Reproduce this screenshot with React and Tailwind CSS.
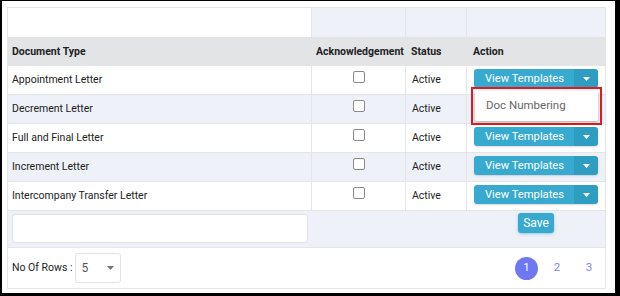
import React from "react";

const rows = [
  "Appointment Letter",
  "Decrement Letter",
  "Full and Final Letter",
  "Increment Letter",
  "Intercompany Transfer Letter",
];

function Caret({ className = "" }) {
  return (
    <svg width="7" height="4" viewBox="0 0 7 4" className={className}>
      <path d="M0 0 L7 0 L3.5 4 Z" fill="currentColor" />
    </svg>
  );
}

function ViewBtn() {
  return (
    <div className="flex h-[19px] w-[124px] rounded-[3px] overflow-hidden shadow-[0_1px_2px_rgba(0,0,0,0.15)]">
      <div className="flex-1 bg-[#38aad0] text-white text-[11.2px] leading-[19px] pl-[11px] whitespace-nowrap">View Templates</div>
      <div className="w-[24px] bg-[#2f9cc2] flex items-center justify-center text-white">
        <Caret />
      </div>
    </div>
  );
}

function Checkbox() {
  return <div className="w-[12px] h-[12px] rounded-[2px] border border-[#8a8a8a] bg-white" />;
}

export default function App() {
  return (
    <div
      className="w-[620px] h-[296px] bg-white border-l-2 border-t border-r-[5px] border-b-[3px] border-black pl-[5px] pt-[6px] overflow-hidden"
      style={{ fontFamily: "Roboto, 'Liberation Sans', sans-serif" }}
    >
      <div className="w-[599px] border border-[#e3e5e8] text-[10.5px] text-[#222] relative">
        {/* top empty row */}
        <div className="flex h-[29px]">
          <div className="w-[304px] bg-white border-r border-[#e3e5e8]" />
          <div className="w-[94px] bg-[#eef1f7] border-r border-[#e3e5e8]" />
          <div className="w-[61px] bg-[#eef1f7] border-r border-[#e3e5e8]" />
          <div className="flex-1 bg-[#eef1f7]" />
        </div>
        {/* header */}
        <div className="flex h-[29px] bg-[#e3e4e6] font-bold items-center whitespace-nowrap">
          <div className="w-[304px] pl-[4px]">Document Type</div>
          <div className="w-[94px] pl-[4px]">Acknowledgement</div>
          <div className="w-[61px] pl-[5px]">Status</div>
          <div className="flex-1 pl-[6px]">Action</div>
        </div>
        {rows.map((r, i) => (
          <div
            key={r}
            className={`flex h-[29px] border-b border-[#e3e5e8] ${i % 2 === 1 ? "bg-[#eef1f8]" : "bg-white"}`}
          >
            <div className="w-[304px] pl-[4px] flex items-center border-r border-[#e3e5e8]">{r}</div>
            <div className="w-[94px] flex justify-center pt-[5px] border-r border-[#e3e5e8]">
              <Checkbox />
            </div>
            <div className="w-[61px] pl-[6px] pt-[6px] border-r border-[#e3e5e8]">Active</div>
            <div className="flex-1 pl-[7px] pt-[3px]">{i === 1 ? null : <ViewBtn />}</div>
          </div>
        ))}
        {/* save row */}
        <div className="flex h-[37px] bg-[#eef1f8] border-b border-[#e3e5e8]">
          <div className="w-[304px] pl-[4px] pt-[3px]">
            <div className="w-[296px] h-[29px] bg-white border border-[#dfe1e5] rounded-[3px]" />
          </div>
          <div className="w-[94px]" />
          <div className="w-[61px]" />
          <div className="flex-1 flex justify-center pt-[2px]">
            <div className="h-[20px] px-[5px] bg-[#38aad0] text-white text-[12px] leading-[20px] rounded-[3px] shadow-[0_1px_3px_rgba(56,170,208,0.5)]">
              Save
            </div>
          </div>
        </div>
        {/* footer */}
        <div className="flex h-[40px] items-center bg-white">
          <div className="pl-[4px] flex items-center gap-[3px]">
            <span>No Of Rows :</span>
            <div className="w-[46px] h-[30px] border border-[#dfe1e5] rounded-[3px] flex items-center justify-between pl-[5px] pr-[6px] text-[#555]">
              <span className="text-[12px]">5</span>
              <Caret className="text-[#777]" />
            </div>
          </div>
          <div className="ml-auto flex items-center pr-[3px] text-[11.5px]">
            <div className="w-[23px] h-[23px] rounded-full bg-[#6f78f2] text-white flex items-center justify-center">1</div>
            <div className="w-[38px] text-center text-[#7c84f3]">2</div>
            <div className="w-[26px] text-center text-[#7c84f3]">3</div>
          </div>
        </div>

        {/* dropdown menu overlay */}
        <div className="absolute left-[463px] top-[79px] w-[131px] h-[38px] border-2 border-[#e3191e] p-[2px]">
          <div className="w-full h-full bg-white rounded-[2px] shadow-[0_1px_3px_rgba(0,0,0,0.3)] text-[#666] text-[11.5px] pl-[11px] flex items-center">
            Doc Numbering
          </div>
        </div>
      </div>
    </div>
  );
}
